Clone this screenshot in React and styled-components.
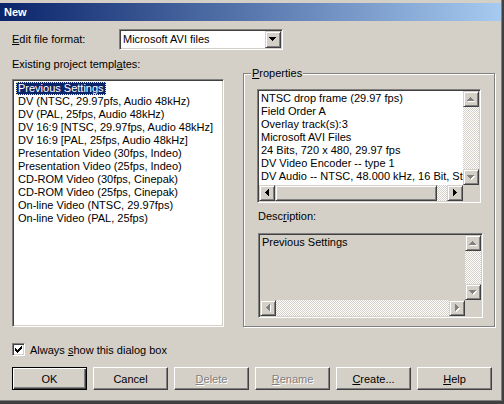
import styled, { createGlobalStyle } from "styled-components";

const TEMPLATES = [
  "Previous Settings",
  "DV (NTSC, 29.97pfs, Audio 48kHz)",
  "DV (PAL, 25fps, Audio 48kHz)",
  "DV 16:9 [NTSC, 29.97fps, Audio 48kHz]",
  "DV 16:9 [PAL, 25fps, Audio 48kHz]",
  "Presentation Video (30fps, Indeo)",
  "Presentation Video (25fps, Indeo)",
  "CD-ROM Video (30fps, Cinepak)",
  "CD-ROM Video (25fps, Cinepak)",
  "On-line Video (NTSC, 29.97fps)",
  "On-line Video (PAL, 25fps)",
];

const PROPERTIES = [
  "NTSC drop frame (29.97 fps)",
  "Field Order A",
  "Overlay track(s):3",
  "Microsoft AVI Files",
  "24 Bits, 720 x 480, 29.97 fps",
  "DV Video Encoder -- type 1",
  "DV Audio -- NTSC, 48.000 kHz, 16 Bit, Stereo",
];

// pixel triangles, like the old win32 glyphs
const ARROWS = {
  up: { d: "M3 0h1v1h1v1h1v1h1v1H0V3h1V2h1V1h1z", w: 8, h: 5 },
  down: { d: "M0 0h7v1H6v1H5v1H4v1H3V3H2V2H1V1H0z", w: 8, h: 5 },
  left: { d: "M3 0h1v7H3V6H2V5H1V4H0V3h1V2h1V1h1z", w: 5, h: 8 },
  right: { d: "M0 0h1v1h1v1h1v1h1v1H3v1H2v1H1v1H0z", w: 5, h: 8 },
};

const GlobalStyle = createGlobalStyle`
  html, body {
    margin: 0;
    background: #d4d0c8;
  }
  body {
    font-family: "Liberation Sans", Arial, sans-serif;
    font-size: 11px;
    color: #000;
  }
  * {
    box-sizing: border-box;
  }
`;

const Window = styled.div`
  width: 504px;
  height: 404px;
  display: flex;
  flex-direction: column;
  padding-top: 3px;
  background: #d4d0c8;
  border-right: 2px solid #404040;
  border-bottom: 3px solid #404040;
  box-shadow: inset -1px -1px #808080;
`;

const TitleBar = styled.div`
  height: 18px;
  margin-right: 1px;
  display: flex;
  align-items: center;
  padding-left: 4px;
  background: linear-gradient(to right, #0a246a, #a6caf0);
  color: #fff;
  font-weight: bold;
`;

const Body = styled.div`
  padding: 8px 0 0 12px;
  display: flex;
  flex-direction: column;
`;

const FormatRow = styled.div`
  display: flex;
  align-items: center;
  height: 21px;
`;

const Label = styled.span`
  display: block;
  line-height: 13px;
  width: ${(p) => (p.$width ? `${p.$width}px` : "auto")};
  margin: ${(p) => p.$margin || "0"};
`;

const Combo = styled.div`
  width: 164px;
  height: 21px;
  display: flex;
  background: #fff;
  border: 1px solid;
  border-color: #808080 #fff #fff #808080;
  box-shadow: inset 1px 1px #404040, inset -1px -1px #d4d0c8;
  padding: 1px;
`;

const ComboText = styled.div`
  flex: 1;
  padding-left: 2px;
  line-height: 17px;
`;

const RaisedBox = styled.div`
  display: flex;
  align-items: center;
  justify-content: center;
  background: #d4d0c8;
  border: 1px solid;
  border-color: #d4d0c8 #404040 #404040 #d4d0c8;
  box-shadow: inset 1px 1px #fff, inset -1px -1px #808080;
`;

const ComboButton = styled(RaisedBox)`
  width: 16px;
  height: 17px;
`;

const MainGrid = styled.div`
  display: grid;
  grid-template-columns: 212px 252px;
  column-gap: 19px;
  margin-top: 8px;
`;

const Column = styled.div`
  display: flex;
  flex-direction: column;
`;

const Sunken = styled.div`
  border: 1px solid;
  border-color: #808080 #fff #fff #808080;
  box-shadow: inset 1px 1px #404040, inset -1px -1px #d4d0c8;
  padding: 1px;
`;

const ListBox = styled(Sunken)`
  margin-top: 8px;
  height: 248px;
  background: #fff;
  display: flex;
  flex-direction: column;
  align-items: flex-start;
  padding-top: 2px;
`;

const ListItem = styled.div`
  line-height: 13px;
  margin-left: 2px;
  padding: 0 2px;
  white-space: nowrap;
  ${(p) =>
    p.$selected &&
    `
    background: #0a246a;
    color: #fff;
    outline: 1px dotted #f0e8a0;
    outline-offset: -1px;
  `}
`;

const GroupBox = styled.div`
  position: relative;
  margin-top: 15px;
  padding: 15px 0 0 13px;
  border: 1px solid #808080;
  box-shadow: inset 1px 1px #fff, 1px 1px #fff;
`;

const Caption = styled.span`
  position: absolute;
  top: -7px;
  left: 7px;
  padding: 0 1px;
  line-height: 13px;
  background: #d4d0c8;
`;

const Pane = styled(Sunken)`
  width: ${(p) => p.$w}px;
  height: ${(p) => p.$h}px;
  margin: ${(p) => p.$margin || "0"};
  display: grid;
  grid-template-columns: 1fr 16px;
  grid-template-rows: 1fr 16px;
  background: ${(p) => p.$bg};
`;

const PaneText = styled.div`
  overflow: hidden;
  padding: 1px 2px;
  line-height: 13px;
  white-space: nowrap;
`;

const VBar = styled.div`
  display: flex;
  flex-direction: column;
`;

const HBar = styled.div`
  display: flex;
`;

const ArrowButton = styled(RaisedBox)`
  width: 16px;
  height: 16px;
  flex: none;
`;

const Track = styled.div`
  flex: 1;
  background-color: #d4d0c8;
  background-image: conic-gradient(
    #fff 25%,
    transparent 0 50%,
    #fff 0 75%,
    transparent 0
  );
  background-size: 2px 2px;
`;

const Thumb = styled(RaisedBox)`
  width: ${(p) => p.$size}px;
  flex: none;
`;

const Corner = styled.div`
  background: #d4d0c8;
`;

const CheckRow = styled.label`
  display: flex;
  align-items: center;
  margin-top: 16px;
  height: 13px;
`;

const CheckBox = styled(Sunken)`
  width: 13px;
  height: 13px;
  background: #fff;
  display: flex;
  align-items: center;
  justify-content: center;
  padding: 0;
  margin-right: 5px;
`;

const ButtonRow = styled.div`
  display: flex;
  gap: 6px;
  margin-top: 11px;
`;

const Button = styled.div`
  width: 75px;
  height: 23px;
  display: flex;
  align-items: center;
  justify-content: center;
  background: #d4d0c8;
  border: 1px solid;
  border-color: #fff #404040 #404040 #fff;
  box-shadow: inset -1px -1px #808080;
  color: ${(p) => (p.$disabled ? "#808080" : "#000")};
  text-shadow: ${(p) => (p.$disabled ? "1px 1px #fff" : "none")};
  ${(p) =>
    p.$default &&
    `
    border: 1px solid #000;
    box-shadow: inset 1px 1px #fff, inset -1px -1px #404040, inset -2px -2px #808080;
  `}
`;

const U = styled.u`
  text-decoration-thickness: 1px;
  text-underline-offset: 1px;
`;

const Arrow = ({ dir, disabled }) => {
  const a = ARROWS[dir];
  return (
    <svg width={a.w} height={a.h} viewBox={`0 0 ${a.w} ${a.h}`} shapeRendering="crispEdges">
      {disabled && <path d={a.d} fill="#fff" transform="translate(1 1)" />}
      <path d={a.d} fill={disabled ? "#808080" : "#000"} />
    </svg>
  );
};

const App = () => {
  return (
    <>
      <GlobalStyle />
      <Window>
        <TitleBar>New</TitleBar>
        <Body>
          <FormatRow>
            <Label $width={107}>
              <U>E</U>dit file format:
            </Label>
            <Combo>
              <ComboText>Microsoft AVI files</ComboText>
              <ComboButton>
                <Arrow dir="down" />
              </ComboButton>
            </Combo>
          </FormatRow>

          <MainGrid>
            <Column>
              <Label>
                Existing project templ<U>a</U>tes:
              </Label>
              <ListBox>
                {TEMPLATES.map((t, i) => (
                  <ListItem key={t} $selected={i === 0}>
                    {t}
                  </ListItem>
                ))}
              </ListBox>
            </Column>

            <GroupBox>
              <Caption>
                <U>P</U>roperties
              </Caption>
              <Pane $w={224} $h={114} $bg="#fff">
                <PaneText>
                  {PROPERTIES.map((line) => (
                    <div key={line}>{line}</div>
                  ))}
                </PaneText>
                <VBar>
                  <ArrowButton>
                    <Arrow dir="up" disabled />
                  </ArrowButton>
                  <Track />
                  <ArrowButton>
                    <Arrow dir="down" disabled />
                  </ArrowButton>
                </VBar>
                <HBar>
                  <ArrowButton>
                    <Arrow dir="left" />
                  </ArrowButton>
                  <Thumb $size={162} />
                  <Track />
                  <ArrowButton>
                    <Arrow dir="right" />
                  </ArrowButton>
                </HBar>
                <Corner />
              </Pane>

              <Label $margin="7px 0 0 1px">
                Desc<U>r</U>iption:
              </Label>
              <Pane $w={225} $h={85} $bg="#d4d0c8" $margin="10px 0 0 1px">
                <PaneText>Previous Settings</PaneText>
                <VBar>
                  <ArrowButton>
                    <Arrow dir="up" disabled />
                  </ArrowButton>
                  <Track />
                  <ArrowButton>
                    <Arrow dir="down" disabled />
                  </ArrowButton>
                </VBar>
                <HBar>
                  <ArrowButton>
                    <Arrow dir="left" disabled />
                  </ArrowButton>
                  <Track />
                  <ArrowButton>
                    <Arrow dir="right" disabled />
                  </ArrowButton>
                </HBar>
                <Corner />
              </Pane>
            </GroupBox>
          </MainGrid>

          <CheckRow>
            <CheckBox>
              <svg width="7" height="7" viewBox="0 0 7 7" shapeRendering="crispEdges">
                <path d="M6 0h1v3H6v1H5v1H4v1H3v1H2V6H1V5H0V2h1v1h1v1h1V3h1V2h1V1h1z" fill="#000" />
              </svg>
            </CheckBox>
            <span>
              Always <U>s</U>how this dialog box
            </span>
          </CheckRow>

          <ButtonRow>
            <Button $default>OK</Button>
            <Button>Cancel</Button>
            <Button $disabled>
              <span>
                <U>D</U>elete
              </span>
            </Button>
            <Button $disabled>
              <span>
                <U>R</U>ename
              </span>
            </Button>
            <Button>
              <span>
                <U>C</U>reate...
              </span>
            </Button>
            <Button>
              <span>
                <U>H</U>elp
              </span>
            </Button>
          </ButtonRow>
        </Body>
      </Window>
    </>
  );
};

export default App;
